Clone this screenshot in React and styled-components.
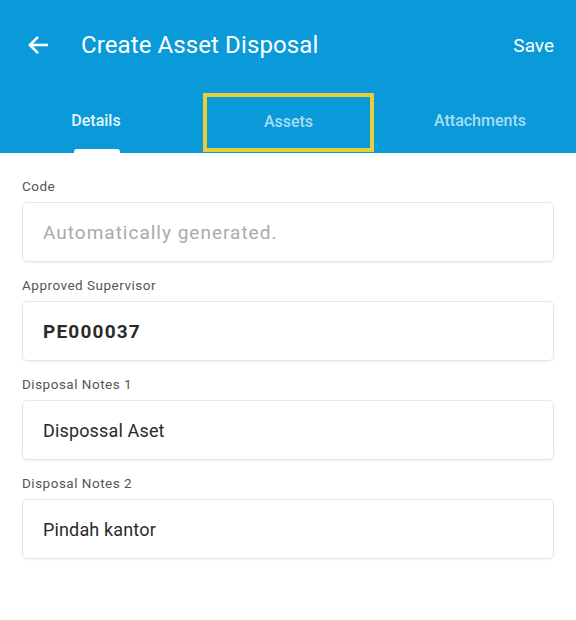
import styled, { createGlobalStyle } from "styled-components";

const GlobalStyle = createGlobalStyle`
  body {
    margin: 0;
    background: #fff;
    font-family: Roboto, "Noto Sans", sans-serif;
  }
`;

const Page = styled.div`
  width: 576px;
  height: 620px;
  background: #fff;
  overflow: hidden;
`;

const Header = styled.header`
  background-color: #0a9ad9;
  color: #fff;
  height: 153px;
  display: flex;
  flex-direction: column;
`;

const Toolbar = styled.div`
  height: 90px;
  display: flex;
  align-items: center;
  padding: 0 22px 0 24px;
`;

const BackButton = styled.button`
  background: none;
  border: 0;
  padding: 0;
  width: 28px;
  height: 28px;
  display: flex;
  align-items: center;
  justify-content: center;
  color: #fff;
  margin-right: 29px;
`;

const Title = styled.h1`
  flex: 1;
  margin: 0;
  font-size: 24px;
  font-weight: 400;
  letter-spacing: 0.1px;
`;

const SaveButton = styled.button`
  background: none;
  border: 0;
  padding: 0;
  color: #fff;
  font-family: inherit;
  font-size: 19px;
  font-weight: 400;
`;

const Tabs = styled.nav`
  flex: 1;
  display: grid;
  grid-template-columns: repeat(3, 1fr);
`;

const Tab = styled.div`
  position: relative;
  display: flex;
  align-items: center;
  justify-content: center;
  padding-bottom: 2px;
  font-size: 16px;
  font-weight: 500;
  color: ${(p) => (p.$active ? "#e4f6ff" : "#a9ddf5")};
  box-sizing: border-box;
  border: ${(p) => (p.$highlight ? "4px solid #e8cf3a" : "none")};
  margin: ${(p) => (p.$highlight ? "3px 10px 1px 11px" : "0")};

  &::after {
    content: "";
    display: ${(p) => (p.$active ? "block" : "none")};
    position: absolute;
    bottom: 0;
    left: 50%;
    width: 46px;
    margin-left: -22px;
    height: 4px;
    border-radius: 3px 3px 0 0;
    background: #fff;
  }
`;

const Form = styled.main`
  padding: 23px 22px 0;
  display: flex;
  flex-direction: column;
  gap: 13px;
`;

const Field = styled.div`
  display: flex;
  flex-direction: column;
  gap: 6px;
`;

const Label = styled.label`
  font-size: 13.5px;
  line-height: 20px;
  color: #555;
  letter-spacing: 0.5px;
`;

const InputBox = styled.div`
  height: 60px;
  box-sizing: border-box;
  border: 1px solid #e6e6e6;
  border-radius: 5px;
  box-shadow: 0 1px 2px rgba(0, 0, 0, 0.06);
  display: flex;
  align-items: center;
  padding: 0 20px;
  font-size: ${(p) => (p.$placeholder || p.$bold ? "19px" : "18px")};
  letter-spacing: ${(p) => (p.$bold ? "1.2px" : p.$placeholder ? "1px" : "0.15px")};
  font-weight: ${(p) => (p.$bold ? 700 : 400)};
  color: ${(p) => (p.$placeholder ? "#aaa" : "#2a2a2a")};
`;

const fields = [
  { label: "Code", value: "Automatically generated.", placeholder: true },
  { label: "Approved Supervisor", value: "PE000037", bold: true },
  { label: "Disposal Notes 1", value: "Dispossal Aset" },
  { label: "Disposal Notes 2", value: "Pindah kantor" },
];

export default function App() {
  return (
    <Page>
      <GlobalStyle />
      <Header>
        <Toolbar>
          <BackButton aria-label="Back">
            <svg width="26" height="26" viewBox="0 0 24 24" fill="none" stroke="#fff" strokeWidth="2.4" strokeLinecap="square">
              <path d="M20 12H5" />
              <path d="M12 4.5L4.5 12L12 19.5" strokeLinecap="butt" />
            </svg>
          </BackButton>
          <Title>Create Asset Disposal</Title>
          <SaveButton>Save</SaveButton>
        </Toolbar>
        <Tabs>
          <Tab $active>Details</Tab>
          <Tab $highlight>Assets</Tab>
          <Tab>Attachments</Tab>
        </Tabs>
      </Header>
      <Form>
        {fields.map((f) => (
          <Field key={f.label}>
            <Label>{f.label}</Label>
            <InputBox $placeholder={f.placeholder} $bold={f.bold}>
              {f.value}
            </InputBox>
          </Field>
        ))}
      </Form>
    </Page>
  );
}
